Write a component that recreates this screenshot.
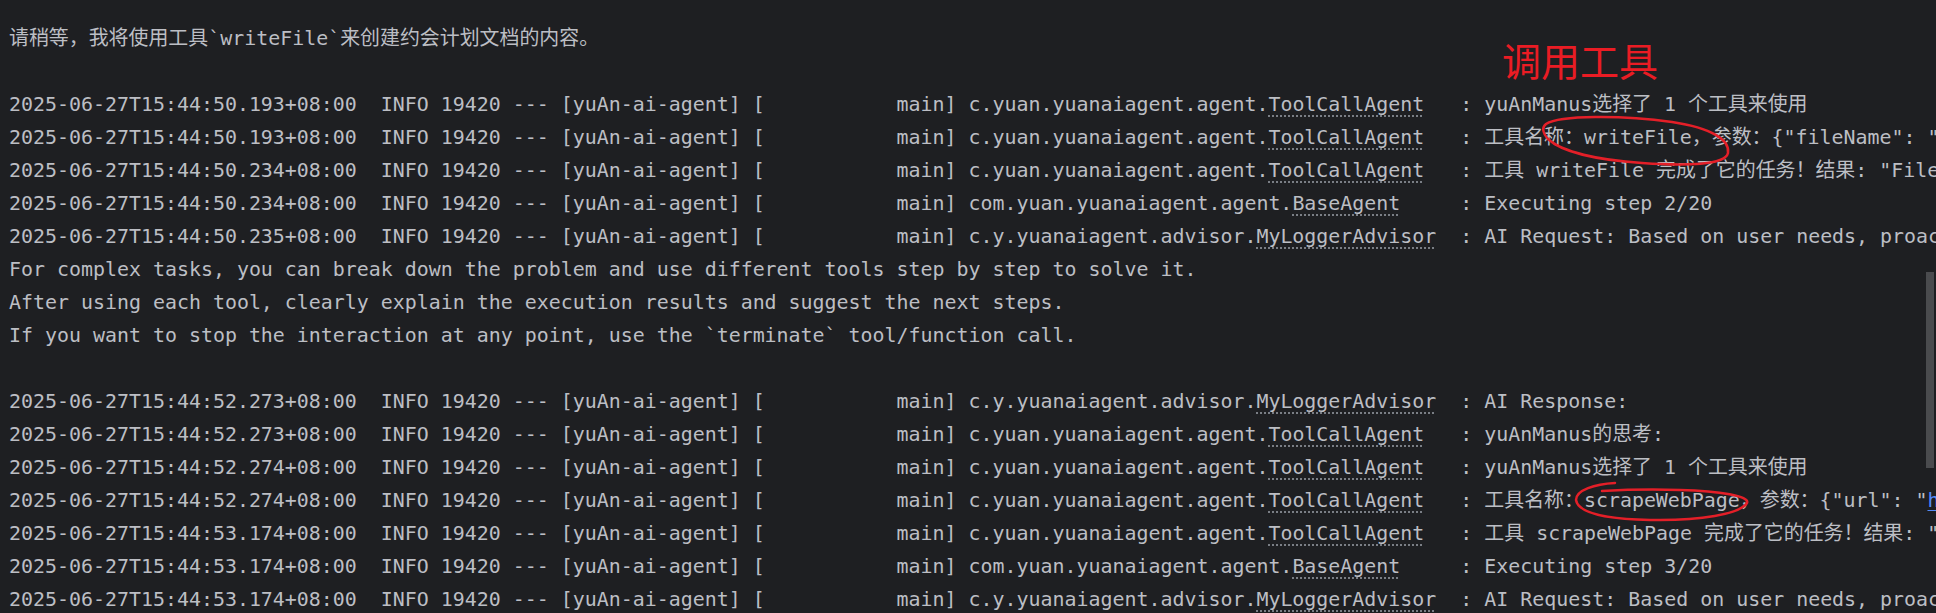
import React from 'react';

type LogLine = {
  ts: string;
  pkg: string;
  cls: string;
  msg: React.ReactNode;
};

const PREFIX = '  INFO 19420 --- [yuAn-ai-agent] [           main] ';

const TOOL = { pkg: 'c.yuan.yuanaiagent.agent.', cls: 'ToolCallAgent' };
const BASE = { pkg: 'com.yuan.yuanaiagent.agent.', cls: 'BaseAgent' };
const ADVISOR = { pkg: 'c.y.yuanaiagent.advisor.', cls: 'MyLoggerAdvisor' };

const Log: React.FC<LogLine> = ({ ts, pkg, cls, msg }) => {
  const pad = ''.padEnd(40 - (pkg.length + cls.length), ' ');
  return (
    <div>
      {ts}
      {PREFIX}
      {pkg}
      <span className="underline decoration-dotted decoration-[#7a7e85] underline-offset-[5px]">{cls}</span>
      {pad} : {msg}
    </div>
  );
};

const Blank = () => <div>&nbsp;</div>;

export default function App() {
  return (
    <div className="relative h-[613px] w-[1936px] overflow-hidden bg-[#1e1f22]">
      <div className="whitespace-pre pl-[9px] pt-[22px] font-['DejaVu_Sans_Mono','Noto_Sans_CJK_SC',monospace] text-[19.93px] leading-[33px] text-[#bcbec4]">
        <div>请稍等，我将使用工具`writeFile`来创建约会计划文档的内容。</div>
        <Blank />
        <Log ts="2025-06-27T15:44:50.193+08:00" {...TOOL} msg="yuAnManus选择了 1 个工具来使用" />
        <Log ts="2025-06-27T15:44:50.193+08:00" {...TOOL} msg={'工具名称：writeFile，参数：{"fileName": "约会计划.md", "content": "# 约会计划"}'} />
        <Log ts="2025-06-27T15:44:50.234+08:00" {...TOOL} msg={'工具 writeFile 完成了它的任务！结果: "File written successfully"'} />
        <Log ts="2025-06-27T15:44:50.234+08:00" {...BASE} msg="Executing step 2/20" />
        <Log ts="2025-06-27T15:44:50.235+08:00" {...ADVISOR} msg="AI Request: Based on user needs, proactively select the most appropriate tool or combination of tools." />
        <div>For complex tasks, you can break down the problem and use different tools step by step to solve it.</div>
        <div>After using each tool, clearly explain the execution results and suggest the next steps.</div>
        <div>If you want to stop the interaction at any point, use the `terminate` tool/function call.</div>
        <Blank />
        <Log ts="2025-06-27T15:44:52.273+08:00" {...ADVISOR} msg="AI Response:" />
        <Log ts="2025-06-27T15:44:52.273+08:00" {...TOOL} msg="yuAnManus的思考:" />
        <Log ts="2025-06-27T15:44:52.274+08:00" {...TOOL} msg="yuAnManus选择了 1 个工具来使用" />
        <Log
          ts="2025-06-27T15:44:52.274+08:00"
          {...TOOL}
          msg={
            <>
              {'工具名称：scrapeWebPage，参数：{"url": "'}
              <span className="text-[#548af7] underline underline-offset-[3px]">https://www.example.com</span>
              {'"}'}
            </>
          }
        />
        <Log ts="2025-06-27T15:44:53.174+08:00" {...TOOL} msg={'工具 scrapeWebPage 完成了它的任务！结果: "<html>"'} />
        <Log ts="2025-06-27T15:44:53.174+08:00" {...BASE} msg="Executing step 3/20" />
        <Log ts="2025-06-27T15:44:53.174+08:00" {...ADVISOR} msg="AI Request: Based on user needs, proactively select the most appropriate tool or combination of tools." />
      </div>

      {/* annotation */}
      <div className="absolute left-[1502px] top-[40px] font-['Noto_Sans_CJK_SC',sans-serif] text-[39px] leading-none text-[#ea1c24]">
        调用工具
      </div>
      <svg className="pointer-events-none absolute left-0 top-0" width="1936" height="613" fill="none">
        <path
          d="M1546 124 C1560 115 1622 115 1672 122 C1712 128 1730 140 1728 153 C1726 165 1686 166 1642 163 C1598 160 1562 152 1548 139 C1542 132 1542 127 1546 124"
          stroke="#e41f28"
          strokeWidth="2.5"
          strokeLinecap="round"
        />
        <path
          d="M1615 483 C1595 484 1576 490 1576 500 C1578 512 1600 519 1650 520 C1700 521 1740 514 1747 503 C1750 496 1720 491 1680 490 C1650 489 1620 490 1602 491"
          stroke="#e41f28"
          strokeWidth="2.5"
          strokeLinecap="round"
        />
      </svg>

      {/* scrollbar */}
      <div className="absolute right-[2px] top-[272px] h-[196px] w-[8px] bg-[#4a4b4e]" />
    </div>
  );
}
